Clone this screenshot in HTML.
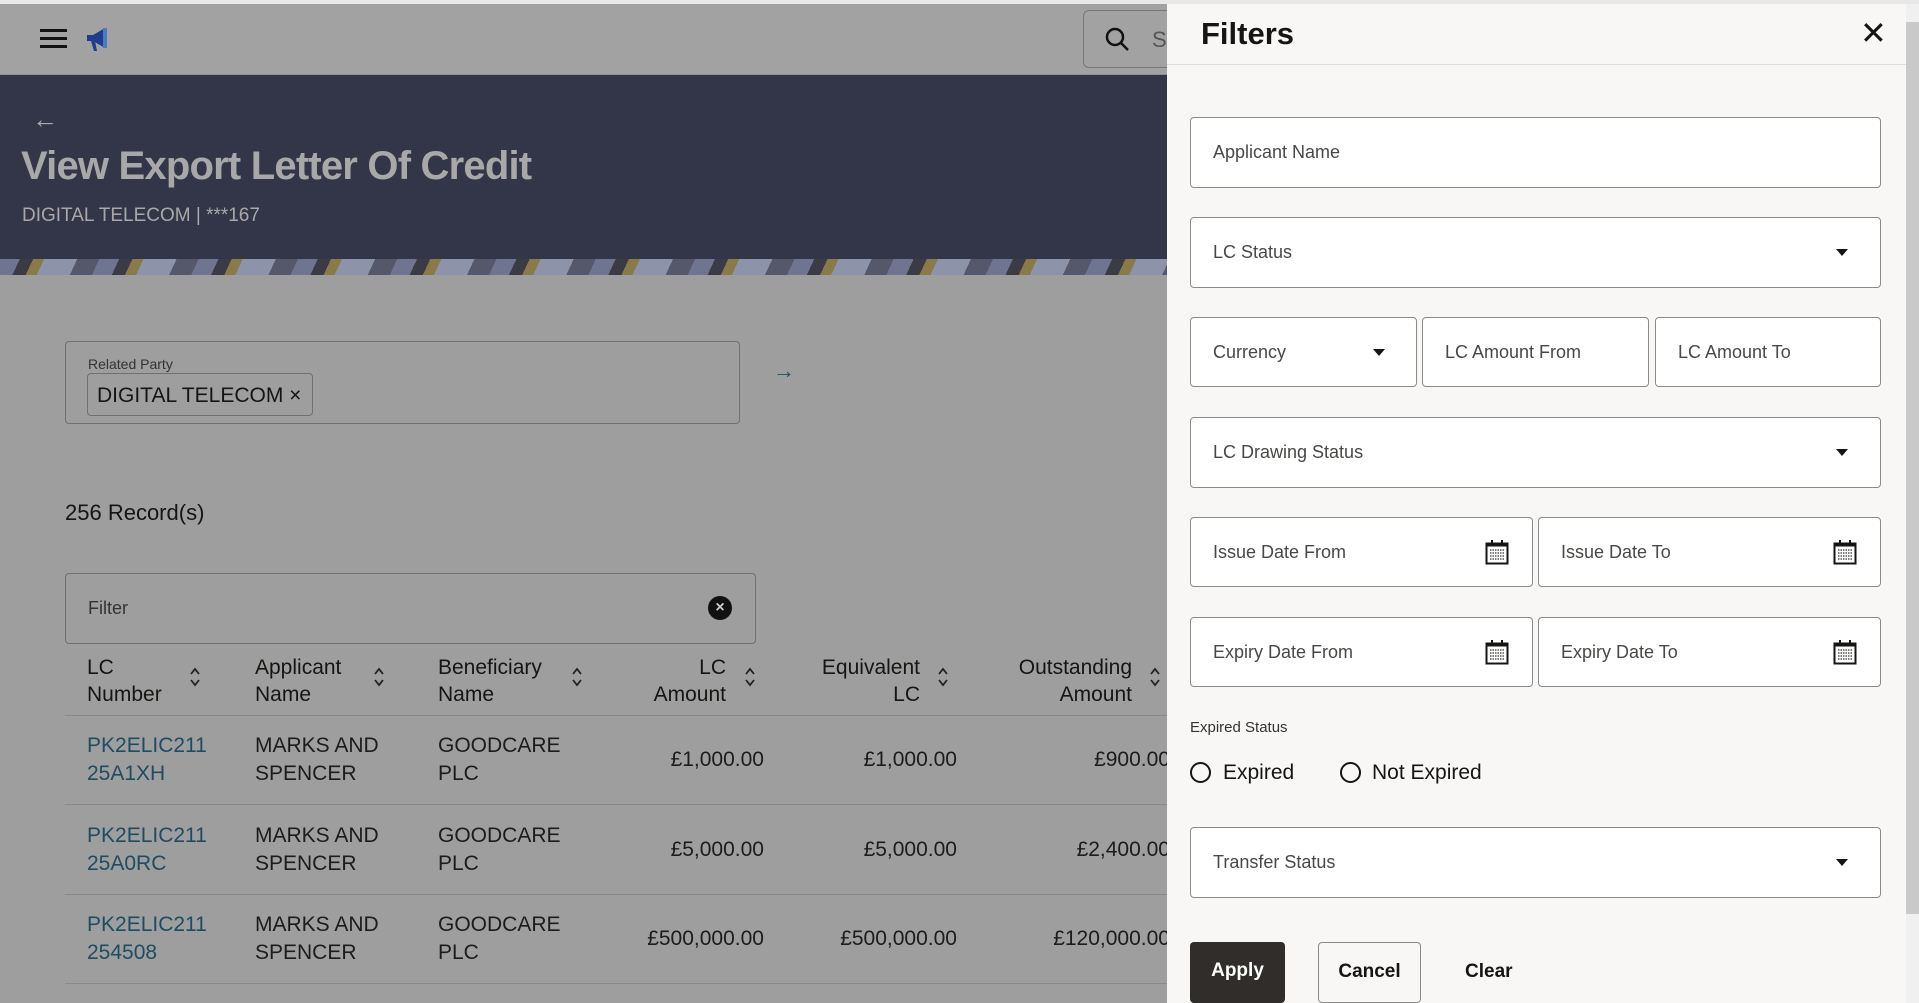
<!DOCTYPE html>
<html><head><meta charset="utf-8"><style>
*{box-sizing:border-box;margin:0;padding:0}
body{width:1919px;height:1003px;overflow:hidden;position:relative;background:#9e9e9e;font-family:"Liberation Sans",sans-serif;color:#161513}
.a{position:absolute}
.top{left:0;top:4px;width:1170px;height:71px;background:#a2a2a2;border-bottom:1px solid #8e8e8e}
.hdr{left:0;top:75px;width:1170px;height:200px;background:#333648}
.strip{left:0;top:259px;width:1170px;height:16px;background:repeating-linear-gradient(115deg,#6f7590 0 18px,#3a3b44 18px 30px,#8a7a4a 30px 40px,#8d93a8 40px 70px,#55586a 70px 90px)}
.fld{position:absolute;border:1px solid #8a8a8a;border-radius:4px;background:#fff;font-size:18px;color:#4a4846;padding-left:22px;display:flex;align-items:center}
.panel{left:1167px;top:4px;width:739px;height:999px;background:#f8f7f5}
.tri{position:absolute;width:0;height:0;border-left:6px solid transparent;border-right:6px solid transparent;border-top:7px solid #161513}
.cal{position:absolute;width:24px;height:26px}
.th{font-size:21px;line-height:27px;color:#161513}
.td{font-size:21px;line-height:28px;color:#1c1c1c}
.lnk{color:#1d4c63}
.r{text-align:right}
.sort{position:absolute}
.hl{left:65px;width:1105px;height:1px;background:#888}
</style></head><body>
<div class="a" style="left:0;top:0;width:1919px;height:4px;background:#e8e8e8"></div>
<div class="a top"></div>
<div class="a" style="left:40px;top:29px;width:27px;height:3px;background:#111;box-shadow:0 8px 0 #111,0 16px 0 #111"></div>
<svg class="a" style="left:85px;top:25px" width="30" height="28" viewBox="0 0 30 28"><path d="M2 10h6l12-7v20l-12-7H2z" fill="#1f3d8a"/><path d="M20 3v20" stroke="#4a7ac0" stroke-width="4"/><path d="M6 16l3 10h3l-2-10z" fill="#1f3d8a"/></svg>
<div class="a" style="left:1083px;top:10px;width:90px;height:58px;border:1px solid #777;border-radius:6px 0 0 6px;border-right:none"></div>
<svg class="a" style="left:1104px;top:26px" width="28" height="28"><circle cx="11" cy="11" r="8" stroke="#111" stroke-width="2.5" fill="none"/><path d="M17 17l7 7" stroke="#111" stroke-width="2.5"/></svg>
<div class="a" style="left:1152px;top:27px;font-size:22px;color:#555">Se</div>
<div class="a hdr"></div>
<div class="a strip"></div>
<div class="a" style="left:32px;top:104px;font-size:26px;color:#aaa">&#8592;</div>
<div class="a" style="left:21px;top:144px;font-size:40px;font-weight:bold;color:#a8a8a8;letter-spacing:-0.8px">View Export Letter Of Credit</div>
<div class="a" style="left:22px;top:205px;font-size:19px;color:#a8a8a8">DIGITAL TELECOM | ***167</div>

<div class="a" style="left:65px;top:341px;width:675px;height:83px;border:1px solid #707070;border-radius:4px"></div>
<div class="a" style="left:88px;top:356px;font-size:14px;color:#333">Related Party</div>
<div class="a" style="left:87px;top:373px;width:226px;height:43px;border:1px solid #707070;border-radius:4px;font-size:21px;padding:10px 0 0 9px;color:#161513">DIGITAL TELECOM &#215;</div>
<div class="a" style="left:773px;top:358px;font-size:22px;color:#1d4c63">&#8594;</div>
<div class="a" style="left:65px;top:500px;font-size:22px;color:#161513">256 Record(s)</div>
<div class="a" style="left:65px;top:573px;width:691px;height:71px;border:1px solid #707070;border-radius:4px"></div>
<div class="a" style="left:88px;top:598px;font-size:18px;color:#333">Filter</div>
<div class="a" style="left:708px;top:596px;width:24px;height:24px;border-radius:50%;background:#111;color:#ccc;font-size:16px;text-align:center;line-height:24px;font-weight:bold">&#215;</div>

<div class="a th" style="left:87px;top:654px">LC<br>Number</div>
<div class="a th" style="left:255px;top:654px">Applicant<br>Name</div>
<div class="a th" style="left:438px;top:654px">Beneficiary<br>Name</div>
<div class="a th r" style="left:600px;top:654px;width:126px">LC<br>Amount</div>
<div class="a th r" style="left:790px;top:654px;width:130px">Equivalent<br>LC</div>
<div class="a th r" style="left:980px;top:654px;width:152px">Outstanding<br>Amount</div>
<svg class="sort" style="left:189px;top:667px" width="12" height="20"><path d="M2 7l4-5 4 5M2 13l4 5 4-5" stroke="#222" stroke-width="1.8" fill="none"/></svg>
<svg class="sort" style="left:373px;top:667px" width="12" height="20"><path d="M2 7l4-5 4 5M2 13l4 5 4-5" stroke="#222" stroke-width="1.8" fill="none"/></svg>
<svg class="sort" style="left:571px;top:667px" width="12" height="20"><path d="M2 7l4-5 4 5M2 13l4 5 4-5" stroke="#222" stroke-width="1.8" fill="none"/></svg>
<svg class="sort" style="left:744px;top:667px" width="12" height="20"><path d="M2 7l4-5 4 5M2 13l4 5 4-5" stroke="#222" stroke-width="1.8" fill="none"/></svg>
<svg class="sort" style="left:937px;top:667px" width="12" height="20"><path d="M2 7l4-5 4 5M2 13l4 5 4-5" stroke="#222" stroke-width="1.8" fill="none"/></svg>
<svg class="sort" style="left:1149px;top:667px" width="12" height="20"><path d="M2 7l4-5 4 5M2 13l4 5 4-5" stroke="#222" stroke-width="1.8" fill="none"/></svg>
<div class="a hl" style="top:715px"></div>
<div class="a hl" style="top:804px"></div>
<div class="a hl" style="top:894px"></div>
<div class="a hl" style="top:983px"></div>

<div class="a td lnk" style="left:87px;top:732px">PK2ELIC211<br>25A1XH</div>
<div class="a td" style="left:255px;top:732px">MARKS AND<br>SPENCER</div>
<div class="a td" style="left:438px;top:732px">GOODCARE<br>PLC</div>
<div class="a td r" style="left:600px;top:746px;width:164px">£1,000.00</div>
<div class="a td r" style="left:790px;top:746px;width:167px">£1,000.00</div>
<div class="a td r" style="left:1000px;top:746px;width:170px">£900.00</div>

<div class="a td lnk" style="left:87px;top:822px">PK2ELIC211<br>25A0RC</div>
<div class="a td" style="left:255px;top:822px">MARKS AND<br>SPENCER</div>
<div class="a td" style="left:438px;top:822px">GOODCARE<br>PLC</div>
<div class="a td r" style="left:600px;top:836px;width:164px">£5,000.00</div>
<div class="a td r" style="left:790px;top:836px;width:167px">£5,000.00</div>
<div class="a td r" style="left:1000px;top:836px;width:170px">£2,400.00</div>

<div class="a td lnk" style="left:87px;top:911px">PK2ELIC211<br>254508</div>
<div class="a td" style="left:255px;top:911px">MARKS AND<br>SPENCER</div>
<div class="a td" style="left:438px;top:911px">GOODCARE<br>PLC</div>
<div class="a td r" style="left:600px;top:925px;width:164px">£500,000.00</div>
<div class="a td r" style="left:790px;top:925px;width:167px">£500,000.00</div>
<div class="a td r" style="left:1000px;top:925px;width:170px">£120,000.00</div>

<div class="a panel"></div>
<div class="a" style="left:1906px;top:4px;width:13px;height:999px;background:#f0f0f0"></div>
<div class="a" style="left:1906px;top:22px;width:13px;height:892px;background:#c9c9c9"></div>
<div class="a" style="left:1201px;top:16px;font-size:31px;font-weight:bold;color:#161513">Filters</div>
<div class="a" style="left:1860px;top:14px;font-size:32px;color:#161513">&#10005;</div>
<div class="a" style="left:1167px;top:64px;width:739px;height:1px;background:#ddd"></div>

<div class="fld" style="left:1190px;top:117px;width:691px;height:71px">Applicant Name</div>
<div class="fld" style="left:1190px;top:217px;width:691px;height:71px">LC Status</div>
<div class="tri" style="left:1836px;top:249px"></div>
<div class="fld" style="left:1190px;top:317px;width:227px;height:70px">Currency</div>
<div class="tri" style="left:1373px;top:349px"></div>
<div class="fld" style="left:1422px;top:317px;width:227px;height:70px">LC Amount From</div>
<div class="fld" style="left:1655px;top:317px;width:226px;height:70px">LC Amount To</div>
<div class="fld" style="left:1190px;top:417px;width:691px;height:71px">LC Drawing Status</div>
<div class="tri" style="left:1836px;top:449px"></div>
<div class="fld" style="left:1190px;top:517px;width:343px;height:70px">Issue Date From</div>
<div class="fld" style="left:1538px;top:517px;width:343px;height:70px">Issue Date To</div>
<div class="fld" style="left:1190px;top:617px;width:343px;height:70px">Expiry Date From</div>
<div class="fld" style="left:1538px;top:617px;width:343px;height:70px">Expiry Date To</div>
<svg class="cal" style="left:1485px;top:539px" viewBox="0 0 24 26"><rect x="1.5" y="4.5" width="21" height="20" fill="#fff" stroke="#161513" stroke-width="2"/><rect x="1.5" y="4.5" width="21" height="3" fill="#161513"/><path d="M7 1v6M17 1v6" stroke="#161513" stroke-width="2"/><path d="M5 11h14M5 14h14M5 17h14M5 20h14" stroke="#555" stroke-width="1.5" stroke-dasharray="1.5 1"/></svg>
<svg class="cal" style="left:1833px;top:539px" viewBox="0 0 24 26"><rect x="1.5" y="4.5" width="21" height="20" fill="#fff" stroke="#161513" stroke-width="2"/><rect x="1.5" y="4.5" width="21" height="3" fill="#161513"/><path d="M7 1v6M17 1v6" stroke="#161513" stroke-width="2"/><path d="M5 11h14M5 14h14M5 17h14M5 20h14" stroke="#555" stroke-width="1.5" stroke-dasharray="1.5 1"/></svg>
<svg class="cal" style="left:1485px;top:639px" viewBox="0 0 24 26"><rect x="1.5" y="4.5" width="21" height="20" fill="#fff" stroke="#161513" stroke-width="2"/><rect x="1.5" y="4.5" width="21" height="3" fill="#161513"/><path d="M7 1v6M17 1v6" stroke="#161513" stroke-width="2"/><path d="M5 11h14M5 14h14M5 17h14M5 20h14" stroke="#555" stroke-width="1.5" stroke-dasharray="1.5 1"/></svg>
<svg class="cal" style="left:1833px;top:639px" viewBox="0 0 24 26"><rect x="1.5" y="4.5" width="21" height="20" fill="#fff" stroke="#161513" stroke-width="2"/><rect x="1.5" y="4.5" width="21" height="3" fill="#161513"/><path d="M7 1v6M17 1v6" stroke="#161513" stroke-width="2"/><path d="M5 11h14M5 14h14M5 17h14M5 20h14" stroke="#555" stroke-width="1.5" stroke-dasharray="1.5 1"/></svg>
<div class="a" style="left:1190px;top:719px;font-size:15px;color:#333">Expired Status</div>
<div class="a" style="left:1190px;top:762px;width:21px;height:21px;border:2px solid #161513;border-radius:50%"></div>
<div class="a" style="left:1223px;top:761px;font-size:21px">Expired</div>
<div class="a" style="left:1340px;top:762px;width:21px;height:21px;border:2px solid #161513;border-radius:50%"></div>
<div class="a" style="left:1372px;top:761px;font-size:21px">Not Expired</div>
<div class="fld" style="left:1190px;top:827px;width:691px;height:71px">Transfer Status</div>
<div class="tri" style="left:1836px;top:859px"></div>
<div class="a" style="left:1190px;top:942px;width:95px;height:61px;background:#312d2a;border-radius:4px;color:#fff;font-size:19px;font-weight:bold;text-align:center;line-height:58px">Apply</div>
<div class="a" style="left:1318px;top:942px;width:103px;height:61px;border:1px solid #8a8a8a;border-radius:4px;font-size:19px;font-weight:bold;text-align:center;line-height:58px">Cancel</div>
<div class="a" style="left:1465px;top:961px;font-size:19px;font-weight:bold">Clear</div>
</body></html>
